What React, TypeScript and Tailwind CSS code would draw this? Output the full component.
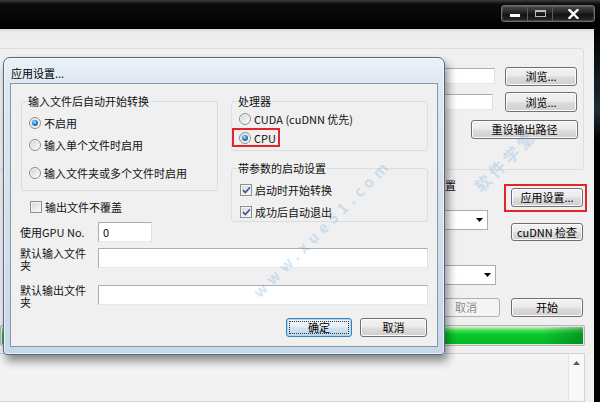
import React from "react";

const btnBase =
  "flex shrink-0 items-center justify-center rounded-[3px] border border-[#707070] bg-[linear-gradient(to_bottom,#f2f2f2_0%,#ebebeb_48%,#dddddd_52%,#cfcfcf_100%)] text-[11px] leading-none text-black shadow-[inset_0_0_0_1px_#fcfcfc]";

const Btn = ({ label, className = "" }: { label: string; className?: string }) => (
  <div className={`${btnBase} ${className}`}>{label}</div>
);

const Field = ({ className = "", value }: { className?: string; value?: string }) => (
  <div
    className={`flex shrink-0 items-center border border-[#abadb3] border-r-[#dbdfe6] border-b-[#e3e9ef] bg-white pl-[4px] text-[11px] leading-none ${className}`}
  >
    {value}
  </div>
);

const Combo = ({ className = "" }: { className?: string }) => (
  <div className={`flex shrink-0 items-center justify-end border border-[#abadb3] bg-white pr-[4px] ${className}`}>
    <svg width="7" height="4" viewBox="0 0 7 4">
      <path d="M0 0h7L3.5 4z" fill="#000" />
    </svg>
  </div>
);

const Radio = ({ checked }: { checked?: boolean }) => (
  <span className="flex h-[12px] w-[12px] shrink-0 items-center justify-center rounded-full border border-[#8e8f8f] bg-[linear-gradient(135deg,#d2d2d2,#fdfdfd)] shadow-[inset_0_0_0_1px_#f6f6f6]">
    {checked && (
      <span className="h-[6px] w-[6px] rounded-full bg-[radial-gradient(circle_at_40%_35%,#a8e4ff_0%,#2c8ad2_45%,#0b3b75_100%)]" />
    )}
  </span>
);

const Check = ({ checked }: { checked?: boolean }) => (
  <span className="flex h-[12px] w-[12px] shrink-0 items-center justify-center border border-[#8e8f8f] bg-[linear-gradient(135deg,#d8d8d8,#fbfbfb)] shadow-[inset_0_0_0_1px_#f4f4f4]">
    {checked && (
      <svg width="9" height="8" viewBox="0 0 9 8">
        <path d="M1 4.2 L3.4 6.6 L8 1.2" fill="none" stroke="#3f5590" strokeWidth="1.7" />
      </svg>
    )}
  </span>
);

const RadioRow = ({ label, checked, className = "" }: { label: string; checked?: boolean; className?: string }) => (
  <div className={`flex h-[14px] items-center gap-[3px] ${className}`}>
    <Radio checked={checked} />
    <span>{label}</span>
  </div>
);

const CheckRow = ({ label, checked, className = "" }: { label: string; checked?: boolean; className?: string }) => (
  <div className={`flex h-[14px] items-center gap-[3px] ${className}`}>
    <Check checked={checked} />
    <span>{label}</span>
  </div>
);

const wm =
  "pointer-events-none absolute -translate-x-1/2 -translate-y-1/2 rotate-[-45deg] whitespace-nowrap font-bold text-[#6fa6d8] opacity-[0.28]";

export default function App() {
  return (
    <div className="relative h-[402px] w-[600px] overflow-hidden bg-[#f0f0f0] font-['Noto_Sans_CJK_SC','Noto_Sans',sans-serif] text-[11px] leading-[14px] text-[#111]">
      {/* main window caption */}
      <div className="flex h-[29px] justify-end bg-[linear-gradient(to_bottom,#3c3c3c_0px,#0c0c0c_4px,#000_100%)] pr-[5px]">
        <div className="mt-[5px] flex h-[17px] overflow-hidden rounded-[3px] border border-[#6e6e6e] bg-[linear-gradient(to_bottom,#4a4a4a,#1f1f1f_50%,#0e0e0e_51%,#2a2a2a)] shadow-[inset_0_0_0_1px_rgba(255,255,255,0.12)]">
          <div className="flex w-[26px] items-center justify-center border-r border-[#5c5c5c]">
            <div className="mt-[4px] h-[3px] w-[10px] bg-white shadow-[0_0_0_1px_#222]" />
          </div>
          <div className="flex w-[25px] items-center justify-center border-r border-[#5c5c5c]">
            <div className="h-[7px] w-[11px] border border-t-2 border-[#bdbdbd]" />
          </div>
          <div className="flex w-[41px] items-center justify-center">
            <svg width="11" height="10" viewBox="0 0 11 10">
              <path d="M1.5 1 L9.5 9 M9.5 1 L1.5 9" stroke="#fff" strokeWidth="2.4" strokeLinecap="square" />
            </svg>
          </div>
        </div>
      </div>

      <div className="flex h-[373px]">
        <div className="flex flex-1 flex-col">
          <div className="h-[19px] bg-[linear-gradient(to_bottom,#d9d9d9,#ececec_3px,#f0f0f0)]" />
          <div className="flex h-[269px]">
            <div className="flex-1" />
            <div className="flex w-[164px] flex-col">
              {/* output group, its left part runs under the dialog */}
              <div className="-ml-[434px] h-[122px] w-[588px] rounded-[3px] border border-[#d5dfe5] pl-[433px]">
                <div className="mt-[18px] flex items-start">
                  <Field className="mt-[1px] h-[16px] w-[65px]" />
                  <Btn label="浏览..." className="ml-[10px] h-[19px] w-[72px]" />
                </div>
                <div className="mt-[6px] flex items-start">
                  <Field className="mt-[2px] h-[16px] w-[63px]" />
                  <Btn label="浏览..." className="ml-[12px] h-[20px] w-[72px]" />
                </div>
                <Btn label="重设输出路径" className="mt-[8px] ml-[41px] h-[19px] w-[107px]" />
              </div>
              {/* settings area */}
              <div className="flex">
                <div className="flex w-[74px] flex-col">
                  <div className="mt-[8px] pl-[4px]">设置</div>
                  <Combo className="mt-[18px] ml-[6px] h-[20px] w-[52px]" />
                  <Combo className="mt-[35px] ml-[6px] h-[20px] w-[60px]" />
                  <div className="mt-[13px] ml-[2px] flex h-[19px] w-[68px] items-center justify-center rounded-[3px] border border-[#adb2b5] bg-[#f4f4f4] leading-none text-[#8a8a8a]">
                    取消
                  </div>
                </div>
                <div className="flex flex-1 flex-col">
                  <div className="mt-[14px] h-[28px] w-[83px] border-2 border-[#e0262b] pt-[2px] pl-[5px]">
                    <Btn label="应用设置..." className="h-[19px] w-[72px]" />
                  </div>
                  <Btn label="cuDNN 检查" className="mt-[11px] ml-[7px] h-[18px] w-[72px]" />
                  <Btn label="开始" className="mt-[57px] ml-[7px] h-[19px] w-[72px]" />
                </div>
              </div>
            </div>
          </div>
          {/* progress */}
          <div className="mt-[8px] mr-[9px] h-[21px] rounded-[2px] border border-[#b4b4b4] bg-[#e6e6e6] p-[1px]">
            <div className="relative h-full w-full bg-[linear-gradient(to_bottom,#c9f5c6_0%,#4ede5a_18%,#08cc2c_40%,#03b723_100%)]">
              <div className="absolute inset-0 bg-[linear-gradient(to_right,transparent_93%,rgba(0,60,20,0.35)_100%)]" />
            </div>
          </div>
          {/* log list */}
          <div className="mt-[7px] mr-[9px] flex flex-1 border border-l-0 border-[#d2d2d2] bg-[#f3f3f3]">
            <div className="flex-1" />
            <div className="w-[16px] border-l border-[#e2e2e2] bg-[#f8f8f8]">
              <div className="flex h-[17px] items-center justify-center">
                <svg width="7" height="4" viewBox="0 0 7 4">
                  <path d="M0 4h7L3.5 0z" fill="#5a5a5a" />
                </svg>
              </div>
            </div>
          </div>
        </div>
        <div className="w-[6px] bg-[linear-gradient(to_bottom,#000_0%,#1d2d36_22%,#000_30%,#000_100%)]" />
      </div>

      {/* dialog */}
      <div className="absolute top-[57px] left-[3px] flex h-[298px] w-[442px] flex-col rounded-t-[7px] rounded-b-[4px] border border-[#56687c] bg-[linear-gradient(to_bottom,#eaf1f8_0%,#dde7f2_10%,#c8d8ea_100%)] shadow-[inset_0_0_0_1px_rgba(255,255,255,0.55),3px_6px_10px_rgba(0,0,0,0.45)]">
        <div className="flex h-[25px] items-center pt-[4px] pl-[7px] text-black">应用设置...</div>
        <div className="mx-[6px] h-[264px] border border-[#8796a8] bg-[#f0f0f0] px-[9px] pt-[10px]">
          <div className="flex gap-[13px]">
            <div className="ml-[1px] flex w-[197px] flex-col">
              <fieldset className="rounded-[3px] border border-[#d5dfe5] pb-[10px] pl-[7px]">
                <legend className="-ml-[2px] px-[1px]">输入文件后自动开始转换</legend>
                <RadioRow label="不启用" checked className="mt-[8px]" />
                <RadioRow label="输入单个文件时启用" className="mt-[8px]" />
                <RadioRow label="输入文件夹或多个文件时启用" className="mt-[14px]" />
              </fieldset>
              <CheckRow label="输出文件不覆盖" className="mt-[9px] pl-[9px]" />
              <div className="mt-[8px] -ml-[1px] flex items-center">
                <span className="w-[78px]">使用GPU No.</span>
                <Field value="0" className="h-[20px] w-[54px]" />
              </div>
            </div>
            <div className="flex w-[197px] flex-col">
              <fieldset className="rounded-[3px] border border-[#d5dfe5] pb-[3px] pl-[7px]">
                <legend className="-ml-[2px] px-[1px]">处理器</legend>
                <RadioRow label="CUDA (cuDNN 优先)" className="mt-[4px]" />
                <div className="mt-[2px] -ml-[7px] flex h-[19px] w-[48px] items-center border-2 border-[#e0262b] pl-[5px]">
                  <RadioRow label="CPU" checked />
                </div>
              </fieldset>
              <fieldset className="mt-[10px] rounded-[3px] border border-[#d5dfe5] pb-[2px] pl-[8px]">
                <legend className="-ml-[3px] px-[1px]">带参数的启动设置</legend>
                <CheckRow label="启动时开始转换" checked className="mt-[8px]" />
                <CheckRow label="成功后自动退出" checked className="mt-[8px]" />
              </fieldset>
            </div>
          </div>
          <div className="mt-[5px] flex items-start">
            <span className="w-[72px] leading-[12px]">默认输入文件夹</span>
            <Field className="mt-[1px] ml-[6px] h-[20px] flex-1" />
          </div>
          <div className="mt-[13px] flex items-start">
            <span className="w-[72px] leading-[12px]">默认输出文件夹</span>
            <Field className="mt-[1px] ml-[6px] h-[20px] flex-1" />
          </div>
          <div className="mt-[10px] mr-[1px] flex justify-end gap-[8px]">
            <div className="flex h-[19px] w-[66px] rounded-[3px] border border-[#3c7fb1] bg-[linear-gradient(to_bottom,#f2f7fb_0%,#e5eff7_48%,#d3e3ef_52%,#c4d8e8_100%)] p-[2px] shadow-[inset_0_0_0_1px_#a9d8f7]">
              <div className="flex flex-1 items-center justify-center border border-dotted border-[#333] leading-none text-black">
                确定
              </div>
            </div>
            <Btn label="取消" className="h-[19px] w-[67px]" />
          </div>
        </div>
      </div>

      {/* watermark */}
      <span className={`${wm} top-[228px] left-[322px] text-[15px] tracking-[5px]`}>www.xue51.com</span>
      <span className={`${wm} top-[160px] left-[505px] text-[16px] tracking-[4px]`}>软件学堂</span>
    </div>
  );
}
